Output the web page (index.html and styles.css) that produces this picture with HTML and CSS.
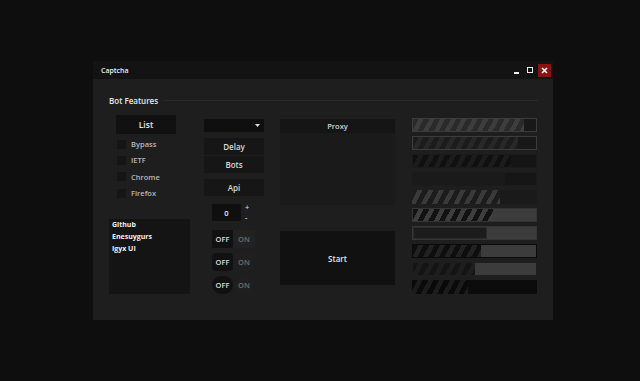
FILE: index.html
```html
<!DOCTYPE html>
<html lang="en">
<head>
    <meta charset="UTF-8">
    <meta name="viewport" content="width=device-width, initial-scale=1.0">
    <title>Captcha</title>
    <link rel="stylesheet" href="styles.css">
</head>
<body>

<div class="window">
    <div class="title-bar">
        <span class="title">Captcha</span>
        <div class="window-buttons">
            <span class="btn-min"></span>
            <span class="btn-max"></span>
            <span class="btn-close">
                <svg width="7" height="7" viewBox="0 0 7 7"><path d="M1 1L6 6M6 1L1 6" stroke="#fff" stroke-width="1.6"/></svg>
            </span>
        </div>
    </div>

    <div class="window-body">
        <div class="group-header">
            <span>Bot Features</span>
            <div class="group-line"></div>
        </div>

        <div class="columns">
            <div class="col col-left">
                <div class="list-button">List</div>
                <div class="checks">
                    <label class="check"><span class="box"></span>Bypass</label>
                    <label class="check"><span class="box"></span>IETF</label>
                    <label class="check"><span class="box"></span>Chrome</label>
                    <label class="check"><span class="box"></span>Firefox</label>
                </div>
                <div class="list-box">
                    <div>Github</div>
                    <div>Enesuygurs</div>
                    <div>Igyx UI</div>
                </div>
            </div>

            <div class="col col-mid">
                <div class="combo">
                    <svg width="5" height="3" viewBox="0 0 5 3"><path d="M0 0H5L2.5 3Z" fill="#ddd"/></svg>
                </div>
                <div class="btn btn-delay">Delay</div>
                <div class="btn btn-bots">Bots</div>
                <div class="btn btn-api">Api</div>
                <div class="numeric">
                    <div class="num-value">0</div>
                    <div class="num-spin">
                        <span>+</span>
                        <span>-</span>
                    </div>
                </div>
                <div class="toggle">
                    <span class="off">OFF</span><span class="on">ON</span>
                </div>
                <div class="toggle round">
                    <span class="off">OFF</span><span class="on">ON</span>
                </div>
                <div class="toggle pill">
                    <span class="off">OFF</span><span class="on">ON</span>
                </div>
            </div>

            <div class="col col-proxy">
                <div class="proxy">
                    <div class="proxy-head">Proxy</div>
                    <div class="proxy-body"></div>
                </div>
                <div class="start">Start</div>
            </div>

            <div class="col col-bars">
                <div class="bar bar1"><div class="fill" style="width: 90%"></div></div>
                <div class="bar bar2"><div class="fill" style="width: 85%"></div></div>
                <div class="bar bar3"><div class="fill" style="width: 80%"></div></div>
                <div class="bar bar4"><div class="fill" style="width: 75%"></div></div>
                <div class="bar bar5"><div class="fill" style="width: 70%"></div></div>
                <div class="bar bar6"><div class="fill" style="width: 65%"></div></div>
                <div class="bar bar7"><div class="fill" style="width: 60%"></div></div>
                <div class="bar bar8"><div class="fill" style="width: 55%"></div></div>
                <div class="bar bar9"><div class="fill" style="width: 50%"></div></div>
                <div class="bar bar10"><div class="fill" style="width: 45%"></div></div>
            </div>
        </div>
    </div>
</div>

</body>
</html>
```

FILE: styles.css
```css
body {
    margin: 0;
    background-color: #0e0e0e;
    font-family: 'Open Sans', 'Noto Sans', sans-serif;
    font-weight: 600;
    font-size: 7.5px;
    color: #ddd;
}

.window {
    width: 460px;
    height: 259px;
    margin: 61px 0 0 93px;
    background-color: #1e1e1e;
    display: flex;
    flex-direction: column;
}

.title-bar {
    height: 18px;
    background-color: #131313;
    display: flex;
    align-items: center;
    justify-content: space-between;
    padding: 0 2px 0 8px;
}

.title {
    color: #eee;
    font-size: 7px;
}

.window-buttons {
    display: flex;
    align-items: center;
}

.btn-min {
    width: 5px;
    height: 2px;
    background-color: #eee;
    margin: 5px 8px 0 0;
}

.btn-max {
    width: 4px;
    height: 4px;
    border: 1px solid #eee;
    margin-right: 5px;
}

.btn-close {
    width: 13px;
    height: 13px;
    background-color: #8a1212;
    display: flex;
    align-items: center;
    justify-content: center;
}

.window-body {
    padding: 16px 15px 0 16px;
}

.group-header {
    display: flex;
    align-items: center;
    height: 10px;
    color: #e6e6e6;
    font-size: 8px;
}

.group-line {
    flex: 1;
    height: 1px;
    background-color: #2a2a2a;
    margin-left: 6px;
}

.columns {
    display: flex;
    align-items: flex-start;
    margin-top: 10px;
}

/* left column */
.col-left {
    width: 81px;
}

.list-button {
    width: 60px;
    height: 19px;
    margin-left: 7px;
    background-color: #111;
    color: #e6e6e6;
    font-size: 8.5px;
    display: flex;
    align-items: center;
    justify-content: center;
}

.checks {
    margin-top: 2px;
    margin-left: 8px;
}

.check {
    height: 16.3px;
    display: flex;
    align-items: center;
    color: #b8b8b8;
}

.check .box {
    width: 9px;
    height: 9px;
    background-color: #151515;
    margin-right: 5px;
}

.list-box {
    margin-top: 18px;
    height: 75px;
    background-color: #141414;
    padding: 0 3px;
    color: #f0f0f0;
    font-weight: 700;
    font-size: 7px;
}

.list-box div {
    height: 11.7px;
    line-height: 11.7px;
}

/* middle column */
.col-mid {
    width: 60px;
    margin-left: 14px;
}

.combo {
    height: 13px;
    margin-top: 4px;
    background-color: #0f0f0f;
    display: flex;
    align-items: center;
    justify-content: flex-end;
    padding-right: 4px;
}

.btn {
    height: 17px;
    background-color: #161616;
    display: flex;
    align-items: center;
    justify-content: center;
    color: #d8d8d8;
    font-size: 8px;
}

.btn-delay {
    margin-top: 6px;
}

.btn-bots {
    margin-top: 1px;
}

.btn-api {
    margin-top: 6px;
}

.numeric {
    display: flex;
    align-items: center;
    margin: 8px 0 0 8px;
}

.num-value {
    width: 29px;
    height: 17px;
    background-color: #0f0f0f;
    display: flex;
    align-items: center;
    justify-content: center;
    color: #eee;
}

.num-spin {
    height: 17px;
    display: flex;
    flex-direction: column;
    justify-content: space-between;
    margin-left: 4px;
    line-height: 7px;
    color: #ddd;
}

.toggle {
    display: flex;
    width: 43px;
    height: 18px;
    margin: 9px 0 0 8px;
}

.toggle + .toggle {
    margin-top: 5px;
}

.toggle span {
    display: flex;
    align-items: center;
    justify-content: center;
}

.toggle .off {
    width: 21px;
    background-color: #111;
    color: #ddd;
}

.toggle .on {
    flex: 1;
    background-color: #222;
    color: #6e6e6e;
}

.toggle.round .off,
.toggle.round .on {
    border-radius: 4px;
}

.toggle.round .on {
    background-color: #1f1f1f;
}

.toggle.pill .off,
.toggle.pill .on {
    border-radius: 9px;
}

.toggle.pill .on {
    background-color: #1f1f1f;
}

/* proxy column */
.col-proxy {
    width: 115px;
    margin-left: 16px;
}

.proxy {
    margin-top: 4px;
}

.proxy-head {
    height: 14px;
    background-color: #151515;
    display: flex;
    align-items: center;
    justify-content: center;
    color: #d6d6d6;
}

.proxy-body {
    height: 72px;
    background-color: #1a1a1a;
}

.start {
    height: 54px;
    margin-top: 26px;
    background-color: #111;
    display: flex;
    align-items: center;
    justify-content: center;
    color: #e6e6e6;
    font-size: 8px;
}

/* progress bars */
.col-bars {
    width: 125px;
    margin-left: 17px;
    margin-top: 3px;
    display: flex;
    flex-direction: column;
    gap: 4px;
}

.bar {
    height: 14px;
    box-sizing: border-box;
    display: flex;
}

.fill {
    height: 100%;
    box-sizing: border-box;
}

.bar1 {
    border: 1px solid #3c3c3c;
    background-color: #181818;
}

.bar1 .fill {
    background: repeating-linear-gradient(118deg, #2a2a2a 0 5px, #3d3d3d 5px 9.5px);
}

.bar2 {
    border: 1px solid #3c3c3c;
    background-color: #181818;
}

.bar2 .fill {
    background: repeating-linear-gradient(118deg, #1c1c1c 0 5px, #282828 5px 9.5px);
}

.bar3 {
    background-color: #151515;
    border: 1px solid #1a1a1a;
}

.bar3 .fill {
    background: repeating-linear-gradient(118deg, #101010 0 5px, #1c1c1c 5px 9.5px);
}

.bar4 {
    background-color: #161616;
    border: 1px solid #1b1b1b;
}

.bar4 .fill {
    background-color: #1a1a1a;
}

.bar5 {
    background-color: #1a1a1a;
}

.bar5 .fill {
    background: repeating-linear-gradient(118deg, #1c1c1c 0 5px, #3a3a3a 5px 9.5px);
}

.bar6 {
    background-color: #3c3c3c;
    border: 1px solid #333;
}

.bar6 .fill {
    background: repeating-linear-gradient(118deg, #121212 0 5px, #3e3e3e 5px 9.5px);
}

.bar7 {
    background-color: #3c3c3c;
    border: 1px solid #353535;
}

.bar7 .fill {
    background-color: #1c1c1c;
    border: 1px solid #2c2c2c;
}

.bar8 {
    background-color: #3c3c3c;
    border: 1px solid #0a0a0a;
}

.bar8 .fill {
    background: repeating-linear-gradient(118deg, #0e0e0e 0 5px, #222 5px 9.5px);
}

.bar9 {
    background-color: #3c3c3c;
    border: 1px solid #1e1e1e;
}

.bar9 .fill {
    background: repeating-linear-gradient(118deg, #141414 0 5px, #1e1e1e 5px 9.5px);
}

.bar10 {
    background-color: #0c0c0c;
}

.bar10 .fill {
    background: repeating-linear-gradient(118deg, #0a0a0a 0 5px, #1c1c1c 5px 9.5px);
}
```
